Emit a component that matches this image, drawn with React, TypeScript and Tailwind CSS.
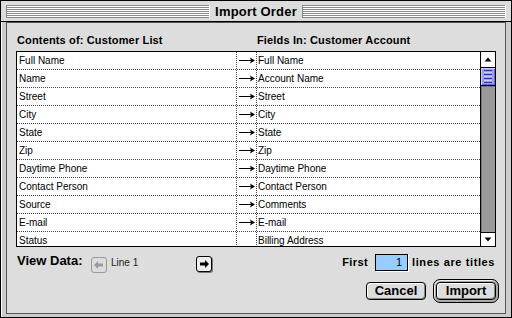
import React from "react";

const rows: [string, string, boolean][] = [
  ["Full Name", "Full Name", true],
  ["Name", "Account Name", true],
  ["Street", "Street", true],
  ["City", "City", true],
  ["State", "State", true],
  ["Zip", "Zip", true],
  ["Daytime Phone", "Daytime Phone", true],
  ["Contact Person", "Contact Person", true],
  ["Source", "Comments", true],
  ["E-mail", "E-mail", true],
  ["Status", "Billing Address", false],
];

function Arrow() {
  return (
    <svg width="19" height="17" viewBox="0 0 19 17">
      <rect x="2" y="8" width="13" height="1" fill="#000" />
      <polygon points="13,5.5 18,8.5 13,11.5 14,8.5" fill="#000" />
    </svg>
  );
}

function Stripes() {
  return (
    <div className="flex-1 h-[13px] bg-[repeating-linear-gradient(to_bottom,#8a8a8a_0px,#8a8a8a_1px,#ffffff_1px,#ffffff_2px)] border-l border-[#888] border-r border-r-[#fff]" />
  );
}

export default function App() {
  return (
    <div className="w-[512px] h-[318px] bg-[#cccccc] border border-black flex flex-col font-['Liberation_Sans',Arial,sans-serif] text-black overflow-hidden">
      {/* Title bar */}
      <div className="h-[21px] shrink-0 bg-[#dddddd] border-b border-black px-[5px] py-[3px] flex items-center">
        <Stripes />
        <div className="px-[5px] text-[13px] font-bold leading-[13px] tracking-[0.2px]">Import Order</div>
        <Stripes />
      </div>
      {/* Frame */}
      <div className="flex-1 flex px-[5px] pb-[3px] shadow-[inset_1px_0_0_#fff]">
        <div className="flex-1 flex flex-col border border-[#555] bg-[#dddddd]">
          {/* Headers */}
          <div className="mt-[11px] h-[13px] pl-[10px] flex text-[11px] font-bold leading-[13px] tracking-[0.15px]">
            <div className="w-[240px]">Contents of: Customer List</div>
            <div>Fields In: Customer Account</div>
          </div>
          {/* Table */}
          <div className="mt-[4px] ml-[9px] w-[480px] h-[196px] border border-black bg-white flex">
            <div className="w-[463px] flex flex-col overflow-hidden text-[10px] leading-[12px]">
              {rows.map(([l, r, a], i) => (
                <div key={i} className="flex h-[18px] shrink-0 border-b border-dotted border-[#444]">
                  <div className="w-[219px] pl-[2px] flex items-center">{l}</div>
                  <div className="w-[20px] border-l border-dotted border-[#444] flex items-center">
                    {a ? <Arrow /> : null}
                  </div>
                  <div className="w-[224px] border-l border-dotted border-[#444] pl-[1px] flex items-center">{r}</div>
                </div>
              ))}
            </div>
            {/* Scrollbar */}
            <div className="w-[15px] border-l border-black flex flex-col">
              <div className="h-[16px] shrink-0 border-b border-black bg-white flex items-center justify-center">
                <svg width="8" height="5" viewBox="0 0 8 5">
                  <polygon points="0.5,4.5 4,0.5 7.5,4.5" fill="#000" />
                </svg>
              </div>
              <div className="h-[18px] shrink-0 border-b border-black bg-[#9c9cff] shadow-[inset_1px_1px_0_#ccccff,inset_-1px_-1px_0_#6666cc] flex flex-col items-center justify-center gap-[1px]">
                <div className="w-[8px] h-[1px] bg-[#333399]" />
                <div className="w-[8px] h-[1px] bg-[#ccccff]" />
                <div className="w-[8px] h-[1px] bg-[#333399]" />
                <div className="w-[8px] h-[1px] bg-[#ccccff]" />
                <div className="w-[8px] h-[1px] bg-[#333399]" />
                <div className="w-[8px] h-[1px] bg-[#ccccff]" />
                <div className="w-[8px] h-[1px] bg-[#333399]" />
              </div>
              <div className="flex-1 bg-[#999999] shadow-[inset_1px_1px_0_#777]" />
              <div className="h-[14px] shrink-0 border-t border-black bg-white flex items-center justify-center">
                <svg width="8" height="5" viewBox="0 0 8 5">
                  <polygon points="0.5,0.5 7.5,0.5 4,4.5" fill="#000" />
                </svg>
              </div>
            </div>
          </div>
          {/* View data row */}
          <div className="mt-[6px] h-[20px] flex justify-between">
            <div className="pl-[10px] flex items-start">
              <div className="w-[74px] text-[13px] font-bold leading-[16px]">View Data:</div>
              <div className="mt-[4px] w-[16px] h-[16px] rounded-[3px] border border-[#999] bg-[#dddddd] flex items-center justify-center">
                <svg width="10" height="8" viewBox="0 0 10 8">
                  <polygon points="0,4 4,0 4,2.5 9,2.5 9,5.5 4,5.5 4,8" fill="#9a9a9a" />
                </svg>
              </div>
              <div className="mt-[4px] ml-[4px] w-[85px] text-[10px] leading-[12px] text-[#222]">Line 1</div>
              <div className="mt-[3px] w-[16px] h-[16px] rounded-[3px] border border-black bg-[#eeeeee] shadow-[1px_1px_0_#777] flex items-center justify-center">
                <svg width="10" height="8" viewBox="0 0 10 8">
                  <polygon points="10,4 6,0 6,2.5 1,2.5 1,5.5 6,5.5 6,8" fill="#000" />
                </svg>
              </div>
            </div>
            <div className="pr-[10px] mt-[1px] h-[17px] flex items-center text-[11px] font-bold leading-[13px]">
              <div className="tracking-[0.4px]">First</div>
              <div className="ml-[7px] w-[33px] h-[17px] border border-black bg-[#99ccff] shadow-[1px_1px_0_#fff] flex items-center justify-end pr-[5px] text-[11px] font-normal">1</div>
              <div className="ml-[4px] tracking-[0.6px]">lines are titles</div>
            </div>
          </div>
          {/* Buttons row */}
          <div className="mt-[6px] pr-[6px] flex justify-end items-center">
            <div className="w-[60px] h-[18px] rounded-[4px] border border-black bg-[#dddddd] shadow-[inset_1px_1px_0_#fff,inset_-1px_-1px_0_#888] flex items-center justify-center text-[13px] font-bold leading-[14px]">
              Cancel
            </div>
            <div className="ml-[7px] w-[66px] h-[24px] rounded-[7px] border border-black bg-[#aaaaaa] shadow-[inset_1px_1px_0_#eee] p-[2px] flex">
              <div className="flex-1 rounded-[4px] border border-black bg-[#dddddd] shadow-[inset_1px_1px_0_#fff,inset_-1px_-1px_0_#888] flex items-center justify-center text-[13px] font-bold leading-[14px]">
                Import
              </div>
            </div>
          </div>
        </div>
      </div>
    </div>
  );
}
